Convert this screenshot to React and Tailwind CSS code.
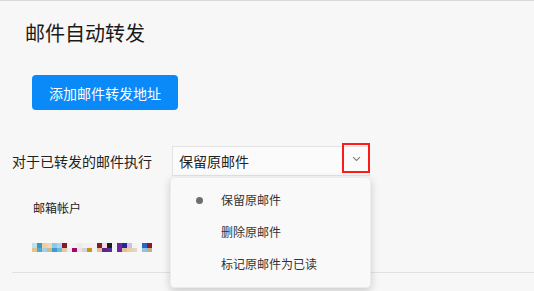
const blur = [
  ['#bfe0ee', '#e6c38a'], ['#3a98c6', '#52a9d2'], ['#f0d09a', '#a9cde0'], ['#ecd8b4', '#d2ba88'],
  ['#8cc8e8', '#3c9ccd'], ['#a6d6ee', '#6fb8de'], ['#86192c', '#e5cba4'], ['#f4f4f4', '#ececec'],
  ['#f2f2f2', '#9c0a6a'], ['#ebebeb', '#efe0e8'], ['#f2f2f2', '#d4d4d4'], ['#f0f0f0', '#d0921f'],
  ['#f3f3f3', '#f3f3f3'], ['#86192a', '#e6bd94'], ['#ecdede', '#632285'], ['#1f1f1f', '#533295'],
  ['#f4f4f4', '#f4f4f4'], ['#7324a0', '#7324a0'], ['#23279a', '#e6c090'], ['#d2bde4', '#f0cba8'],
  ['#f4f4f4', '#e2d6bc'], ['#f5f5f5', '#f5f5f5'], ['#2266d0', '#92c2de'], ['#86192a', '#c4ae84'],
];

export default function App() {
  return (
    <div
      className="w-[534px] h-[291px] bg-[#f7f7f7] border-t border-[#d9d9d9] overflow-hidden text-[#222]"
      style={{ fontFamily: '"Noto Sans CJK SC", "Noto Sans", sans-serif' }}
    >
      <h1 className="pt-[18px] ml-[25px] text-[20px] leading-[28px] font-normal text-[#1a1a1a]">邮件自动转发</h1>

      <button className="mt-[28px] ml-[32px] w-[146px] h-[35px] rounded-[4px] bg-[#0a8af8] text-white text-[14px] leading-[20px] flex items-center justify-center">
        添加邮件转发地址
      </button>

      <div className="mt-[36px] flex items-center">
        <span className="ml-[12px] w-[160px] text-[14px] leading-[20px] text-[#222]">对于已转发的邮件执行</span>
        <div className="relative w-[198px] h-[30px] border border-[#e3e3e3] bg-[#fbfbfb] flex items-center">
          <span className="ml-[6px] text-[14px] leading-[20px] text-[#222]">保留原邮件</span>

          {/* red annotation box around the arrow */}
          <div className="absolute -right-px -top-[4px] w-[28px] h-[30px] border-2 border-[#ff1a1a] flex items-center justify-center">
            <svg width="9" height="6" viewBox="0 0 9 6" fill="none" className="mt-[1px]">
              <path d="M1 1.2 L4.5 4.5 L8 1.2" stroke="#7f7f7f" strokeWidth="1.1" />
            </svg>
          </div>

          {/* dropdown menu */}
          <div className="absolute -left-[3px] top-[30px] w-[201px] h-[111px] bg-[#f9f9f9] rounded-[4px] border border-[#ececec] shadow-[0_3px_8px_rgba(0,0,0,0.18)] pt-[6px] z-10">
            {['保留原邮件', '删除原邮件', '标记原邮件为已读'].map((t, i) => (
              <div key={t} className="h-[32px] flex items-center">
                <span className="w-[50px] flex justify-center pl-[6px]">
                  {i === 0 && <span className="w-[7px] h-[7px] rounded-full bg-[#6e6e6e]" />}
                </span>
                <span className="text-[12px] leading-[16px] text-[#333]">{t}</span>
              </div>
            ))}
          </div>
        </div>
      </div>

      <div className="mt-[24px] ml-[33px] text-[12px] leading-[16px] text-[#222]">邮箱帐户</div>

      <div className="mt-[27px] ml-[32px] flex">
        {blur.map((c, i) => (
          <div key={i} className="flex flex-col">
            <span className="w-[5px] h-[5px]" style={{ background: c[0] }} />
            <span className="w-[5px] h-[4px]" style={{ background: c[1] }} />
          </div>
        ))}
      </div>

      <div className="mt-[20px] ml-[12px] h-px bg-[#e2e2e2]" />
    </div>
  );
}
